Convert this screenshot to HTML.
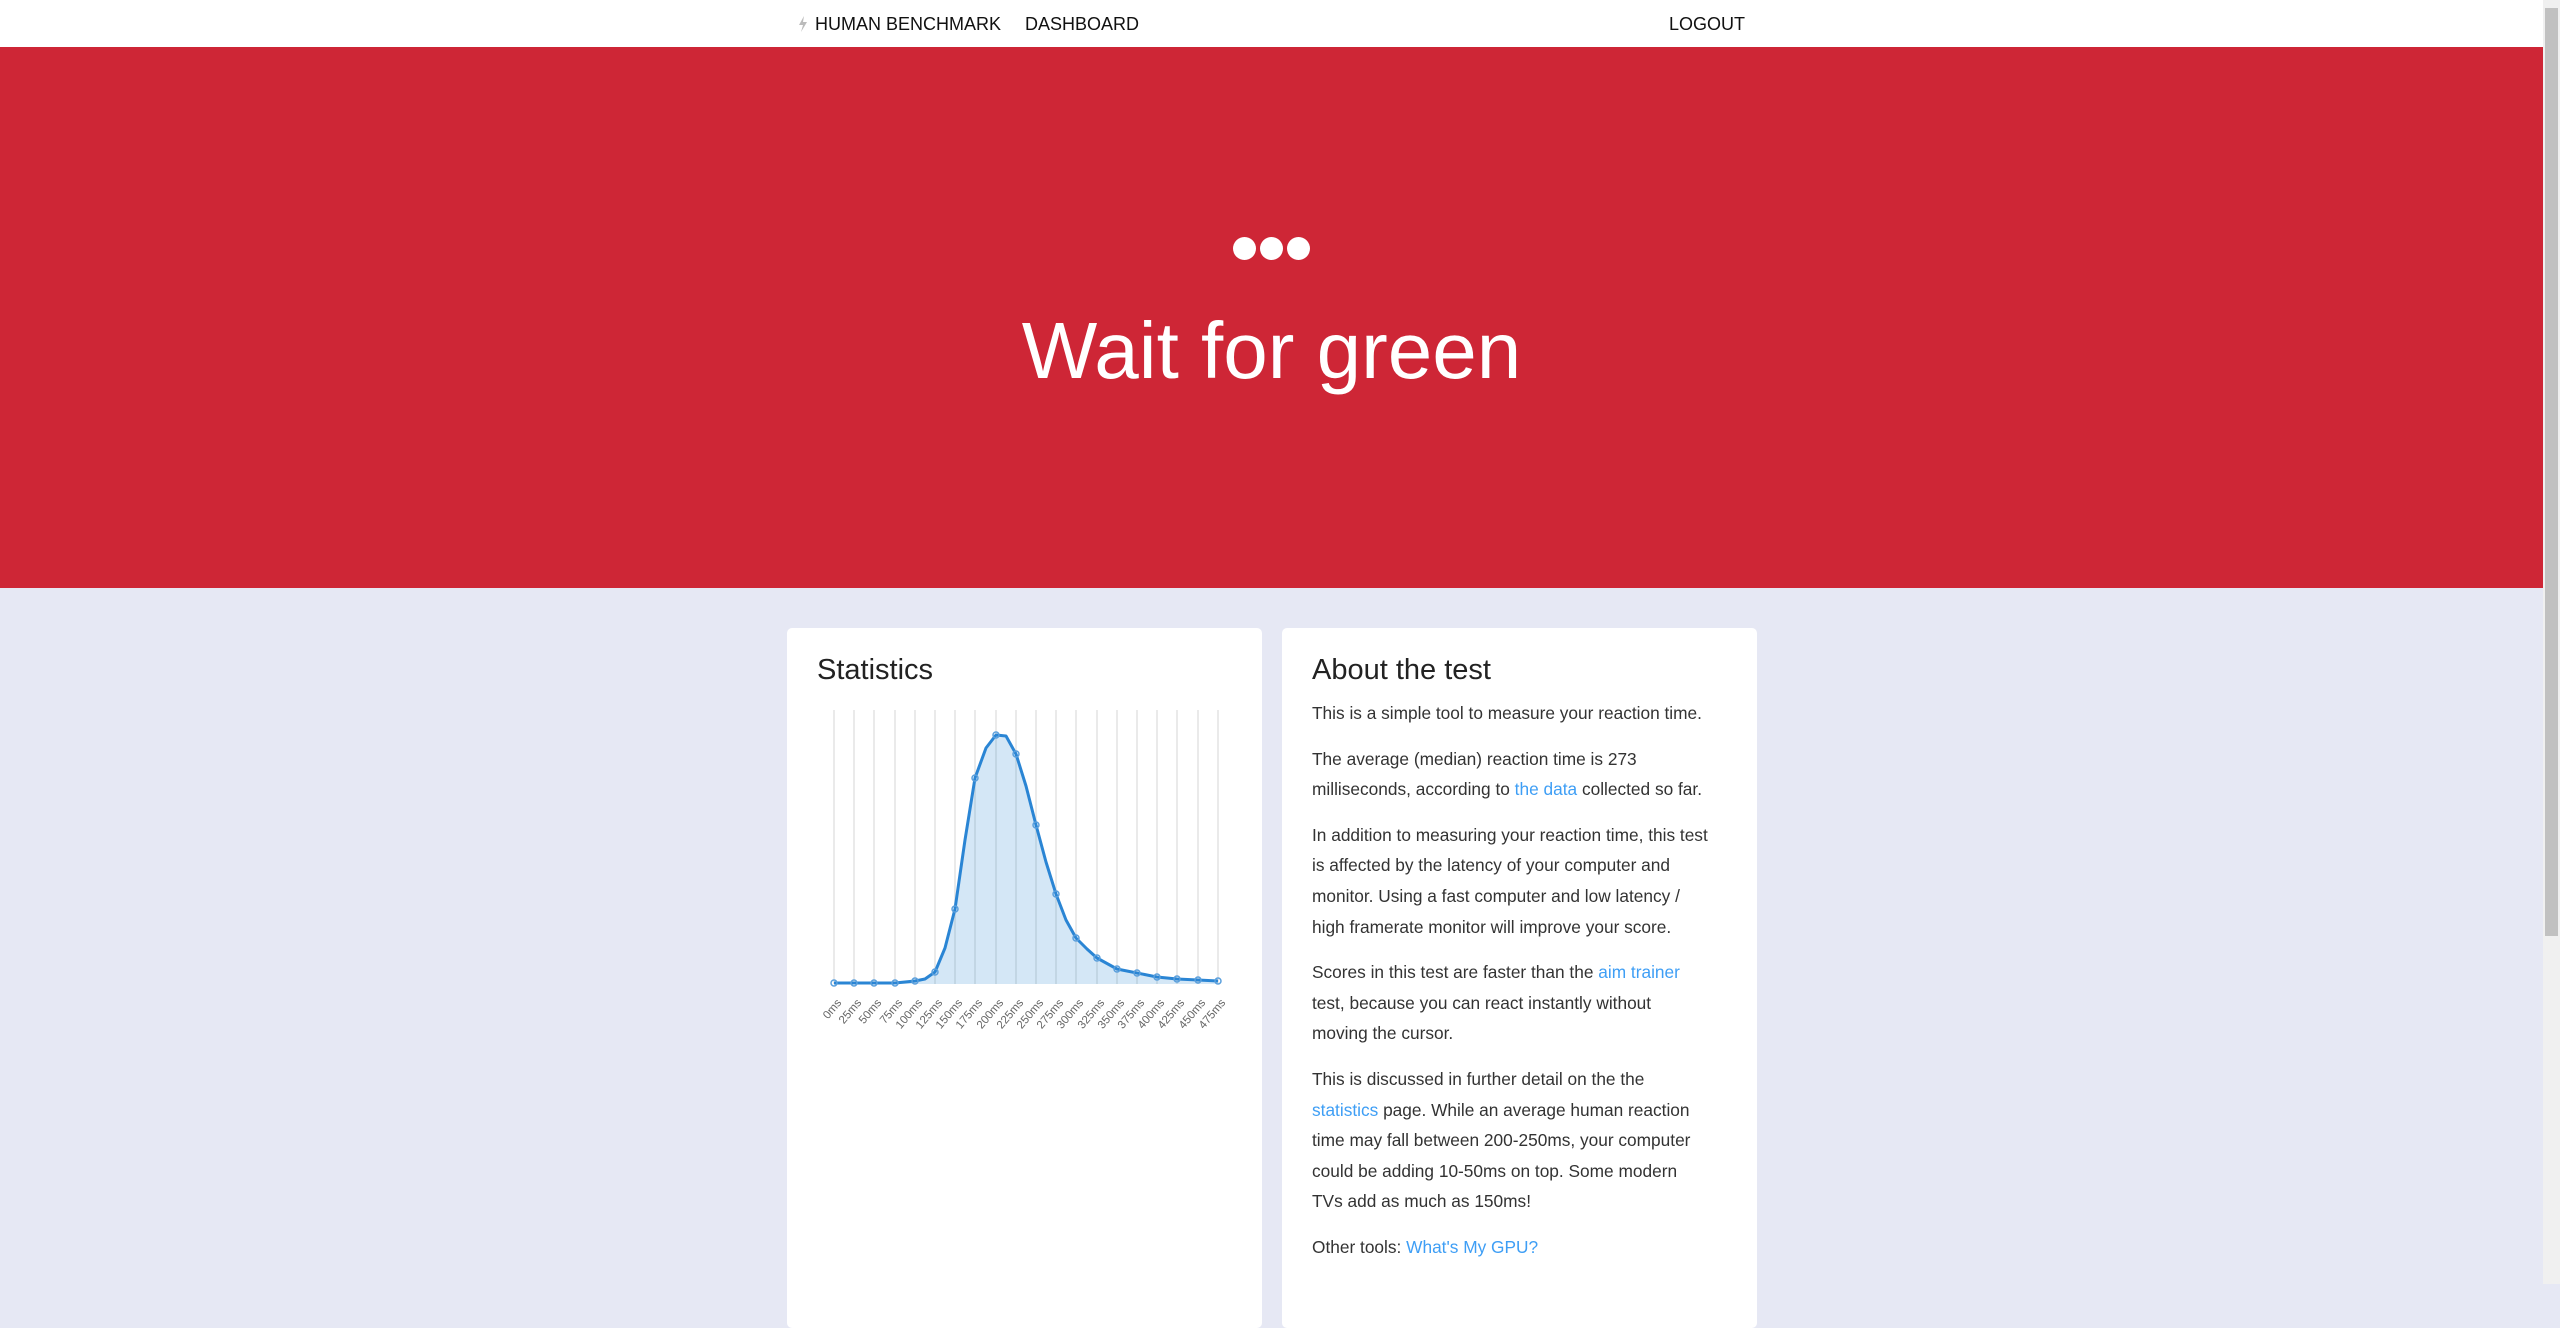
<!DOCTYPE html>
<html><head><meta charset="utf-8"><style>
*{box-sizing:border-box}
html,body{margin:0;padding:0}
body{width:2560px;height:1284px;overflow:hidden;background:#e6e8f4;font-family:"Liberation Sans",sans-serif;position:relative}
.nav{position:absolute;left:0;top:0;width:2543px;height:47px;background:#fff}
.nav span{position:absolute;top:13px;font-size:18px;color:#111;line-height:22px}
.hero{position:absolute;left:0;top:47px;width:2543px;height:541px;background:#ce2636}
.dot{position:absolute;width:23px;height:23px;border-radius:50%;background:#fff;top:190px}
.h1{position:absolute;left:0;width:2543px;text-align:center;top:252px;font-size:80px;color:#fff;line-height:104px}
.card{position:absolute;top:628px;width:475px;height:700px;background:#fff;border-radius:5px}
.card h2{position:absolute;left:30px;top:24px;margin:0;font-weight:normal;font-size:29px;color:#222;line-height:36px}
.txt{position:absolute;left:30px;top:70px;font-size:17.3px;line-height:30.6px;color:#333;white-space:nowrap}
.txt p{margin:0 0 15px}
a{color:#3e9ef5;text-decoration:none}
.sb{position:absolute;left:2543px;top:0;width:17px;height:1284px;background:#f0f0f0}
.th{position:absolute;left:2545px;top:8px;width:13px;height:928px;background:#c1c1c1}
</style></head><body>
<div class="nav">
<svg style="position:absolute;left:798px;top:16px" width="10" height="16" viewBox="0 0 10 16"><path d="M6 0 L1 9 H5 L3 16 L9 6 H5 Z" fill="#bbb"/></svg>
<span style="left:815px">HUMAN BENCHMARK</span>
<span style="left:1025px">DASHBOARD</span>
<span style="left:1669px">LOGOUT</span>
</div>
<div class="hero">
<div class="dot" style="left:1233px"></div><div class="dot" style="left:1260px"></div><div class="dot" style="left:1287px"></div>
<div class="h1">Wait for green</div>
</div>
<div class="card" style="left:787px"><h2>Statistics</h2></div>
<div class="card" style="left:1282px"><h2>About the test</h2>
<div class="txt">
<p>This is a simple tool to measure your reaction time.</p>
<p>The average (median) reaction time is 273<br>milliseconds, according to <a>the data</a> collected so far.</p>
<p>In addition to measuring your reaction time, this test<br>is affected by the latency of your computer and<br>monitor. Using a fast computer and low latency /<br>high framerate monitor will improve your score.</p>
<p>Scores in this test are faster than the <a>aim trainer</a><br>test, because you can react instantly without<br>moving the cursor.</p>
<p>This is discussed in further detail on the the<br><a>statistics</a> page. While an average human reaction<br>time may fall between 200-250ms, your computer<br>could be adding 10-50ms on top. Some modern<br>TVs add as much as 150ms!</p>
<p>Other tools: <a>What's My GPU?</a></p>
</div></div>
<svg style="position:absolute;left:0;top:0" width="2543" height="1284">
<g stroke="#e3e3e3" stroke-width="1.5">
<line x1="834" y1="710" x2="834" y2="984"/><line x1="854" y1="710" x2="854" y2="984"/><line x1="874" y1="710" x2="874" y2="984"/><line x1="895" y1="710" x2="895" y2="984"/><line x1="915" y1="710" x2="915" y2="984"/><line x1="935" y1="710" x2="935" y2="984"/><line x1="955" y1="710" x2="955" y2="984"/><line x1="975" y1="710" x2="975" y2="984"/><line x1="996" y1="710" x2="996" y2="984"/><line x1="1016" y1="710" x2="1016" y2="984"/><line x1="1036" y1="710" x2="1036" y2="984"/><line x1="1056" y1="710" x2="1056" y2="984"/><line x1="1076" y1="710" x2="1076" y2="984"/><line x1="1097" y1="710" x2="1097" y2="984"/><line x1="1117" y1="710" x2="1117" y2="984"/><line x1="1137" y1="710" x2="1137" y2="984"/><line x1="1157" y1="710" x2="1157" y2="984"/><line x1="1177" y1="710" x2="1177" y2="984"/><line x1="1198" y1="710" x2="1198" y2="984"/><line x1="1218" y1="710" x2="1218" y2="984"/>
</g>
<polygon fill="rgba(42,133,212,0.2)" points="834,984 834,983 854,983 874,983 895,983 915,981 925,979 935,972 945,948 955,909 965,840 975,778 986,748 996,735 1006,736 1016,754 1026,786 1036,825 1046,862 1056,894 1066,920 1076,938 1087,949 1097,958 1117,969 1137,973 1157,977 1177,979 1198,980 1218,981 1218,984"/>
<polyline fill="none" stroke="#2a85d4" stroke-width="3" stroke-linejoin="round" points="834,983 854,983 874,983 895,983 915,981 925,979 935,972 945,948 955,909 965,840 975,778 986,748 996,735 1006,736 1016,754 1026,786 1036,825 1046,862 1056,894 1066,920 1076,938 1087,949 1097,958 1117,969 1137,973 1157,977 1177,979 1198,980 1218,981"/>
<g fill="none" stroke="#5a9fdc" stroke-width="1.5">
<circle cx="834" cy="983" r="3"/><circle cx="854" cy="983" r="3"/><circle cx="874" cy="983" r="3"/><circle cx="895" cy="983" r="3"/><circle cx="915" cy="981" r="3"/><circle cx="935" cy="972" r="3"/><circle cx="955" cy="909" r="3"/><circle cx="975" cy="778" r="3"/><circle cx="996" cy="735" r="3"/><circle cx="1016" cy="754" r="3"/><circle cx="1036" cy="825" r="3"/><circle cx="1056" cy="894" r="3"/><circle cx="1076" cy="938" r="3"/><circle cx="1097" cy="958" r="3"/><circle cx="1117" cy="969" r="3"/><circle cx="1137" cy="973" r="3"/><circle cx="1157" cy="977" r="3"/><circle cx="1177" cy="979" r="3"/><circle cx="1198" cy="980" r="3"/><circle cx="1218" cy="981" r="3"/>
</g>
<g font-family="Liberation Sans,sans-serif" font-size="11.5" fill="#666" text-anchor="end">
<text transform="translate(842,1003) rotate(-50)">0ms</text><text transform="translate(862,1003) rotate(-50)">25ms</text><text transform="translate(882,1003) rotate(-50)">50ms</text><text transform="translate(903,1003) rotate(-50)">75ms</text><text transform="translate(923,1003) rotate(-50)">100ms</text><text transform="translate(943,1003) rotate(-50)">125ms</text><text transform="translate(963,1003) rotate(-50)">150ms</text><text transform="translate(983,1003) rotate(-50)">175ms</text><text transform="translate(1004,1003) rotate(-50)">200ms</text><text transform="translate(1024,1003) rotate(-50)">225ms</text><text transform="translate(1044,1003) rotate(-50)">250ms</text><text transform="translate(1064,1003) rotate(-50)">275ms</text><text transform="translate(1084,1003) rotate(-50)">300ms</text><text transform="translate(1105,1003) rotate(-50)">325ms</text><text transform="translate(1125,1003) rotate(-50)">350ms</text><text transform="translate(1145,1003) rotate(-50)">375ms</text><text transform="translate(1165,1003) rotate(-50)">400ms</text><text transform="translate(1185,1003) rotate(-50)">425ms</text><text transform="translate(1206,1003) rotate(-50)">450ms</text><text transform="translate(1226,1003) rotate(-50)">475ms</text>
</g>
</svg>
<div class="sb"></div><div class="th"></div>
</body></html>
